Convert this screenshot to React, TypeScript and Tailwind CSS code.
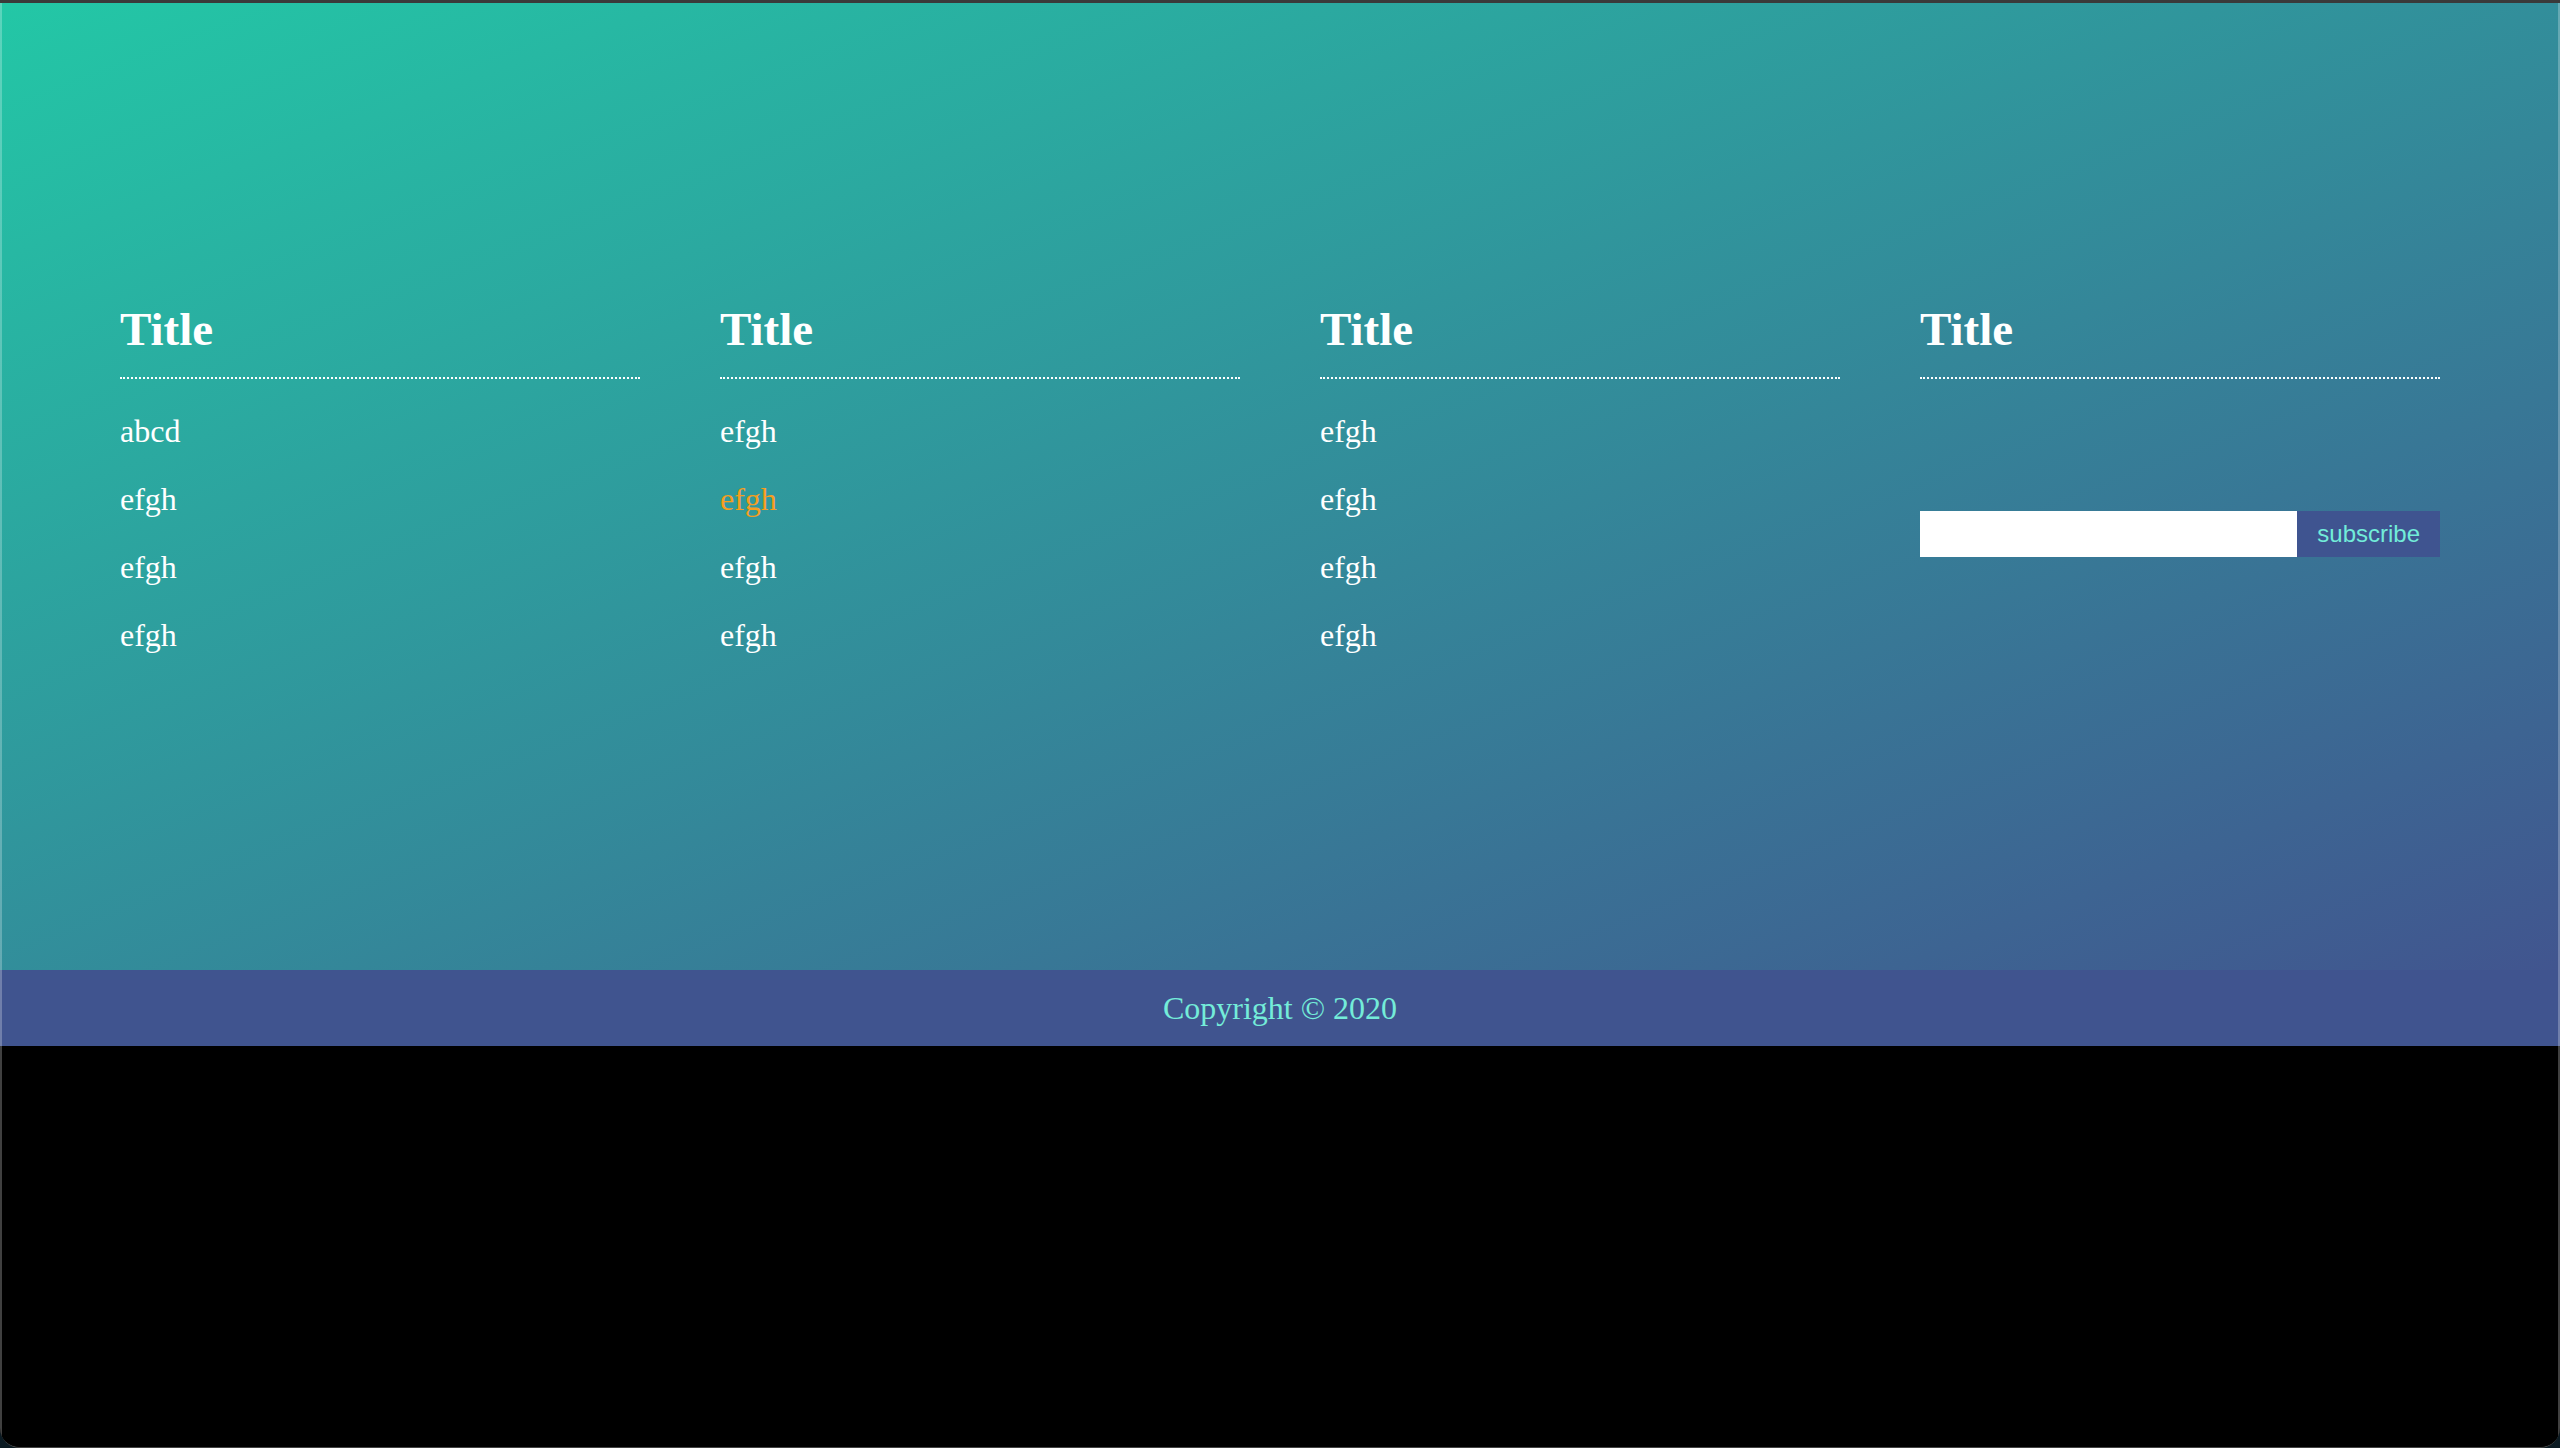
import React from "react";

const columns: { items: string[] }[] = [
  { items: ["abcd", "efgh", "efgh", "efgh"] },
  { items: ["efgh", "efgh", "efgh", "efgh"] },
  { items: ["efgh", "efgh", "efgh", "efgh"] },
];

function Heading() {
  return (
    <div className="border-b-2 border-dotted border-white pb-[24px]">
      <h2 className="text-[47px] leading-[47px] font-bold text-white">Title</h2>
    </div>
  );
}

export default function App() {
  return (
    <div className="w-[2560px] h-[1448px] bg-[#0b1a22] overflow-hidden" style={{ fontFamily: '"Liberation Serif", "Times New Roman", serif' }}>
      <div className="relative h-full rounded-b-[20px] border-t-[3px] border-t-[#3a3a3a] border-b border-b-[#444] bg-black overflow-hidden flex flex-col">
        <section className="h-[967px] bg-[linear-gradient(to_bottom_right,#23c7a6,#41558f)] px-[120px] pt-[303px]">
          <div className="grid grid-cols-4 gap-x-[80px]">
            {columns.map((col, ci) => (
              <div key={ci}>
                <Heading />
                <ul className="mt-[18px]">
                  {col.items.map((it, i) => (
                    <li
                      key={i}
                      className={
                        "text-[32px] leading-[68px] " +
                        (ci === 1 && i === 1 ? "text-[#f59e1f]" : "text-white")
                      }
                    >
                      {it}
                    </li>
                  ))}
                </ul>
              </div>
            ))}
            <div>
              <Heading />
              <form className="mt-[132px] flex h-[46px]" onSubmit={(e) => e.preventDefault()}>
                <input className="flex-1 min-w-0 bg-white outline-none border-0" />
                <button
                  type="submit"
                  className="bg-[#3f5490] text-[#72ecd9] text-[24px] px-[20px]"
                  style={{ fontFamily: '"Liberation Sans", Arial, sans-serif' }}
                >
                  subscribe
                </button>
              </form>
            </div>
          </div>
        </section>
        <footer className="h-[76px] bg-[#40548f] text-center text-[32px] leading-[76px] text-[#74ecd9]">
          Copyright © 2020
        </footer>
        <div className="flex-1 bg-black" />
        <div className="pointer-events-none absolute inset-y-0 left-0 w-[2px] bg-white/25" />
        <div className="pointer-events-none absolute inset-y-0 right-0 w-[2px] bg-white/25" />
      </div>
    </div>
  );
}
